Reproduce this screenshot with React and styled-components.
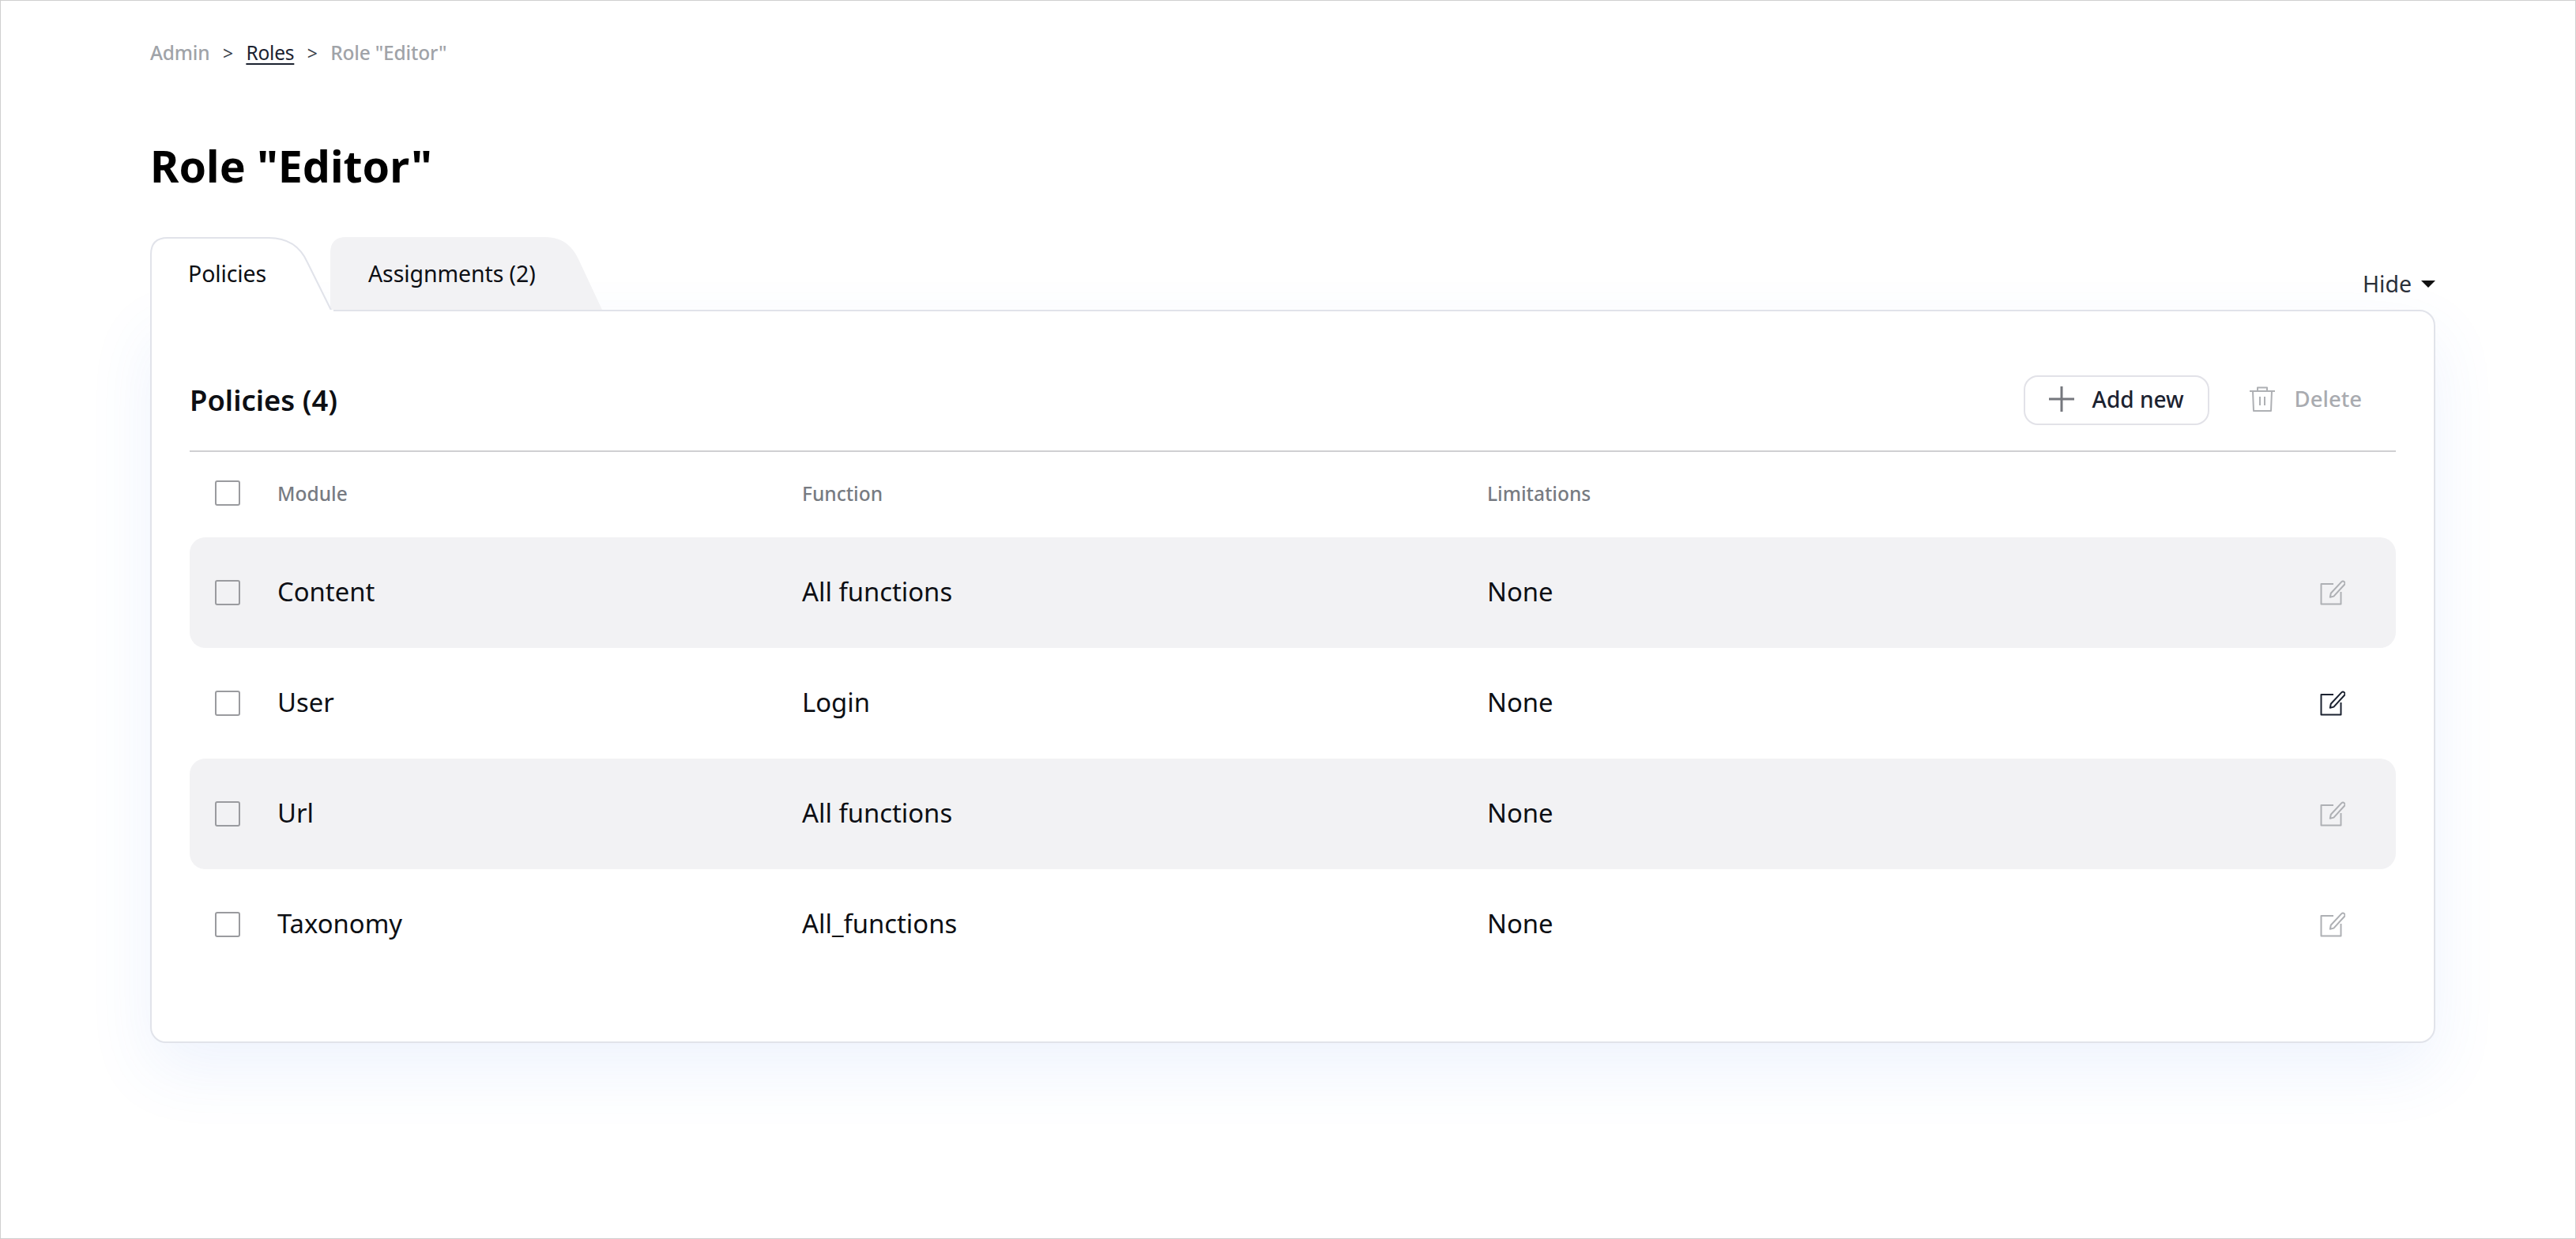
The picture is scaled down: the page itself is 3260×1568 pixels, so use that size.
import React from "react";
import styled, { createGlobalStyle } from "styled-components";

const Global = createGlobalStyle`
  html, body { margin: 0; padding: 0; background: #fff; }
  * { box-sizing: border-box; }
  body { font-family: "Noto Sans", "Open Sans", sans-serif; color: #000; }
`;

const Page = styled.div`
  width: 3260px;
  height: 1568px;
  border: 1px solid #cfcfcf;
  padding: 47px 177px 0 189px;
  overflow: hidden;
`;
const Crumbs = styled.nav`
  display: flex;
  align-items: center;
  height: 36px;
  margin-top: 1px;
  margin-bottom: -1px;
  font-size: 24.5px;
  line-height: 36px;
  letter-spacing: -0.2px;
`;
const CrumbMuted = styled.span`
  color: #a0a3a8;
  font-weight: 500;
`;
const CrumbLink = styled.a`
  color: #1b2230;
  text-decoration: underline;
  text-underline-offset: 4px;
  text-decoration-thickness: 2px;
`;
const CrumbSep = styled.span`
  color: #3a3f4a;
  margin: 0 16.5px;
  font-size: 23px;
`;
const Title = styled.h1`
  margin: 78px 0 0;
  height: 96px;
  font-size: 55.5px;
  line-height: 96px;
  font-weight: 700;
  color: #000;
`;
const TabBar = styled.div`
  display: flex;
  align-items: flex-end;
  margin-top: 42px;
  height: 92px;
  position: relative;
  z-index: 1;
`;
const Tab = styled.button`
  position: relative;
  width: ${(p) => p.$w}px;
  height: ${(p) => (p.$active ? 94 : 92)}px;
  margin: ${(p) => (p.$active ? "0 0 -2px 0" : "0 0 0 -4px")};
  align-self: flex-start;
  border: 0;
  background: transparent;
  padding: 0 0 ${(p) => (p.$active ? 2 : 0)}px ${(p) => p.$pad}px;
  text-align: left;
  font: 400 28.5px/1 "Noto Sans", sans-serif;
  letter-spacing: -0.1px;
  color: #0d0f14;
  z-index: ${(p) => (p.$active ? 2 : 1)};
`;
const TabShape = styled.svg`
  position: absolute;
  left: 0;
  top: 0;
  z-index: -1;
`;
const Hide = styled.button`
  margin-left: auto;
  display: flex;
  align-items: center;
  gap: 12px;
  height: 40px;
  margin-bottom: 13px;
  border: 0;
  background: none;
  padding: 0;
  font: 400 28.5px/40px "Noto Sans", sans-serif;
  color: #2b303a;
`;
const Caret = styled.span`
  width: 0;
  height: 0;
  border-left: 9px solid transparent;
  border-right: 9px solid transparent;
  border-top: 9px solid #111;
`;
const Card = styled.section`
  width: 2892px;
  height: 928px;
  background: #fff;
  border: 2px solid #e1e3ea;
  border-radius: 0 20px 20px 20px;
  padding: 0 48px 80px;
  box-shadow: 0 34px 84px rgba(70, 120, 235, 0.09);
`;
const CardHeader = styled.header`
  display: flex;
  align-items: center;
  height: 178px;
  padding-top: 48px;
  padding-right: 43px;
  border-bottom: 2px solid #cfcfd2;
`;
const CardTitle = styled.h2`
  margin: 0;
  font-size: 36.4px;
  font-weight: 600;
  color: #0d0f14;
`;
const Actions = styled.div`
  margin-left: auto;
  display: flex;
  align-items: center;
`;
const AddButton = styled.button`
  display: flex;
  align-items: center;
  gap: 23px;
  height: 63px;
  padding: 0 30px 3px;
  background: #fff;
  border: 2px solid #e2e2e8;
  border-radius: 18px;
  font: 500 28px/1 "Noto Sans", sans-serif;
  color: #1b2230;
`;
const DeleteButton = styled.button`
  display: flex;
  align-items: center;
  gap: 25px;
  margin-left: 51px;
  padding: 0 0 3px;
  border: 0;
  background: none;
  font: 500 27.5px/1 "Noto Sans", sans-serif;
  color: #a9abb0;
`;
const Cell = styled.div`
  padding-left: 47px;
`;
const Grid = styled.div`
  display: grid;
  grid-template-columns: 32px 664px 867px 1fr 32px;
  align-items: center;
  padding: 0 64px 0 32px;
`;
const HeadRow = styled(Grid)`
  height: 108px;
  padding-bottom: 4px;
  color: #777b82;
  font-size: 24.5px;
  font-weight: 500;
`;
const Row = styled(Grid)`
  height: 140px;
  border-radius: 20px;
  background: ${(p) => (p.$shaded ? "#f2f2f4" : "transparent")};
  font-size: 32.8px;
  color: #0d0f14;
  ${Cell} {
    padding-bottom: 3px;
  }
`;
const Check = styled.span`
  display: block;
  width: 32px;
  height: 32px;
  border: 2px solid #9a9b9f;
  border-radius: 3px;
  background: ${(p) => (p.$shaded ? "#f2f2f4" : "#fff")};
`;
const IconSvg = styled.svg`
  display: block;
  flex: none;
`;

const EditIcon = ({ color }) => (
  <IconSvg width="32" height="32" viewBox="0 0 32 32" fill="none" stroke={color} strokeWidth="2">
    <path d="M17 5H1.5v25.5h25V15" strokeLinejoin="round" />
    <path d="M14.2 21.6l1-5L28.6 2.2a2.6 2.6 0 0 1 3.6 0 2.6 2.6 0 0 1 0 3.6L18.8 20.4z" strokeLinejoin="round" transform="translate(-1.4 .2)" />
  </IconSvg>
);
const PlusIcon = () => (
  <IconSvg width="32" height="32" viewBox="0 0 32 32" stroke="#75777d" strokeWidth="3" fill="none">
    <path d="M16 0v32M0 16h32" />
  </IconSvg>
);
const TrashIcon = () => (
  <IconSvg width="32" height="32" viewBox="0 0 32 32" stroke="#aeb0b4" strokeWidth="2" fill="none" strokeLinejoin="round">
    <path d="M0 6h32" />
    <path d="M10 6V1.5h12V6" />
    <path d="M4 6l1 25h22l1-25" />
    <path d="M13 13v11M19 13v11" />
  </IconSvg>
);

const rows = [
  ["Content", "All functions", "None", true, "#aeb0b4"],
  ["User", "Login", "None", false, "#1b2230"],
  ["Url", "All functions", "None", true, "#aeb0b4"],
  ["Taxonomy", "All_functions", "None", false, "#aeb0b4"],
];

export default function App() {
  return (
    <Page>
      <Global />
      <Crumbs>
        <CrumbMuted>Admin</CrumbMuted>
        <CrumbSep>&gt;</CrumbSep>
        <CrumbLink>Roles</CrumbLink>
        <CrumbSep>&gt;</CrumbSep>
        <CrumbMuted>Role "Editor"</CrumbMuted>
      </Crumbs>
      <Title>Role "Editor"</Title>
      <TabBar>
        <Tab $active $w={232} $pad={48}>
          <TabShape width="232" height="94" viewBox="0 0 232 94">
            <path d="M1 94V22Q1 1 22 1H150C176 1 191 14 199 32L229 92.5" fill="#fff" stroke="#e1e3ea" strokeWidth="2" />
            <path d="M2 92H232V94H2Z" fill="#fff" />
          </TabShape>
          Policies
        </Tab>
        <Tab $w={344} $pad={48}>
          <TabShape width="344" height="92" viewBox="0 0 344 92">
            <path d="M0 92V20Q0 0 20 0H272C296 0 308 14 315 30L344 92Z" fill="#f2f2f4" />
          </TabShape>
          Assignments (2)
        </Tab>
        <Hide>
          Hide
          <Caret />
        </Hide>
      </TabBar>
      <Card>
        <CardHeader>
          <CardTitle>Policies (4)</CardTitle>
          <Actions>
            <AddButton>
              <PlusIcon />
              Add new
            </AddButton>
            <DeleteButton>
              <TrashIcon />
              Delete
            </DeleteButton>
          </Actions>
        </CardHeader>
        <HeadRow>
          <Check />
          <Cell>Module</Cell>
          <Cell>Function</Cell>
          <Cell>Limitations</Cell>
        </HeadRow>
        {rows.map(([m, f, l, shaded, color]) => (
          <Row key={m} $shaded={shaded}>
            <Check $shaded={shaded} />
            <Cell>{m}</Cell>
            <Cell>{f}</Cell>
            <Cell>{l}</Cell>
            <EditIcon color={color} />
          </Row>
        ))}
      </Card>
    </Page>
  );
}
